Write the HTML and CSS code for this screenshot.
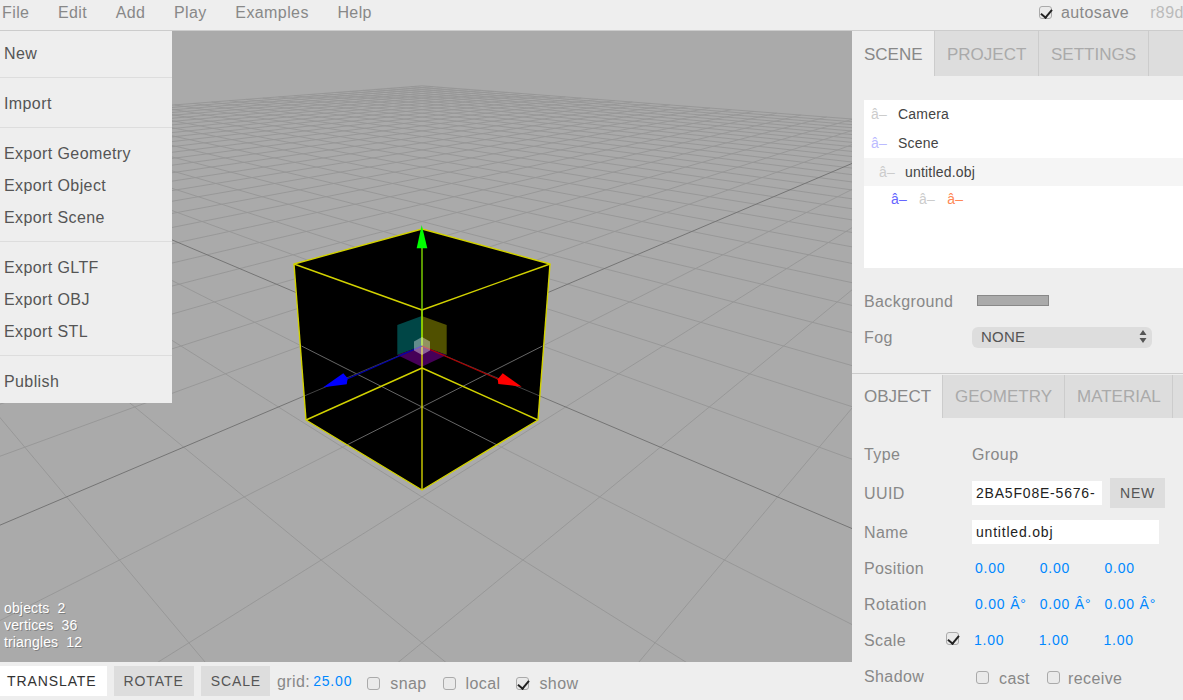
FILE: index.html
```html
<!DOCTYPE html>
<html lang="en">
<head>
<meta charset="utf-8">
<title>three.js editor</title>
<link rel="stylesheet" href="styles.css">
</head>
<body>
<div class="app">
  <header class="menubar">
    <span class="menu-title">File</span>
    <span class="menu-title">Edit</span>
    <span class="menu-title">Add</span>
    <span class="menu-title">Play</span>
    <span class="menu-title">Examples</span>
    <span class="menu-title">Help</span>
    <div class="menu-right">
      <input type="checkbox" class="check autosave-check" checked>
      <span class="autosave">autosave</span>
      <span class="version">r89dev</span>
    </div>
  </header>

  <nav class="file-menu">
    <div class="file-item">New</div>
    <div class="file-sep"></div>
    <div class="file-item">Import</div>
    <div class="file-sep"></div>
    <div class="file-item">Export Geometry</div>
    <div class="file-item">Export Object</div>
    <div class="file-item">Export Scene</div>
    <div class="file-sep"></div>
    <div class="file-item">Export GLTF</div>
    <div class="file-item">Export OBJ</div>
    <div class="file-item">Export STL</div>
    <div class="file-sep"></div>
    <div class="file-item">Publish</div>
  </nav>

  <div class="main">
    <div class="left">
      <div class="viewport">
        <svg class="scene" viewBox="0 31 852 631" preserveAspectRatio="none" xmlns="http://www.w3.org/2000/svg">
          <g id="grid" class="grid"></g>
          <polygon class="cube-body" points="294,264 422,229 550,264 538,420 422,490 306,420"/>
          <clipPath id="cube-clip"><polygon points="294,264 422,229 550,264 538,420 422,490 306,420"/></clipPath>
          <g class="cube-grid" clip-path="url(#cube-clip)">
            <line x1="542.5" y1="346" x2="342.5" y2="447.2"/>
            <line x1="301.5" y1="346" x2="501.5" y2="447.2"/>
            <line class="cube-grid-dark" x1="422" y1="346" x2="565.7" y2="407"/>
            <line class="cube-grid-dark" x1="422" y1="346" x2="278.3" y2="407"/>
          </g>
          <polygon class="gizmo-teal" points="397.3,325 421.7,316 421.7,346 397.3,355"/>
          <polygon class="gizmo-olive" points="421.7,316 446.7,325 446.7,355 421.7,346"/>
          <polygon class="gizmo-purple" points="397.3,355 421.7,346 446.7,355 421.7,366.7"/>
          <g class="cube-edges">
            <polygon points="294,264 422,229 550,264 422,310"/>
            <polygon points="306,420 422,368 538,420 422,490"/>
            <line x1="294" y1="264" x2="306" y2="420"/>
            <line x1="550" y1="264" x2="538" y2="420"/>
            <line x1="422" y1="310" x2="422" y2="490"/>
          </g>
          <line class="axis-green" x1="422" y1="248" x2="422" y2="346"/>
          <line class="axis-red" x1="422" y1="346" x2="500" y2="380"/>
          <line class="axis-blue" x1="422" y1="346" x2="345" y2="380"/>
          <polygon class="head-green" points="421.7,225 416.7,248.3 427.3,248.3"/>
          <polygon class="head-red" points="502.7,373.3 521.7,386.7 498.3,384 497.7,379.3"/>
          <polygon class="head-blue" points="343.3,373.3 323.3,387.3 346.7,384.3 347.7,378.3"/>
          <polygon class="gizmo-center" points="422,337 430,341.5 430,350.5 422,355 414,350.5 414,341.5"/>
        </svg>
        <div class="stats">
          <div>objects&nbsp;&nbsp;2</div>
          <div>vertices&nbsp;&nbsp;36</div>
          <div>triangles&nbsp;&nbsp;12</div>
        </div>
      </div>
      <div class="toolbar">
        <button class="tool tool-first tool-active">TRANSLATE</button>
        <button class="tool">ROTATE</button>
        <button class="tool tool-scale">SCALE</button>
        <span class="grid-label">grid:</span>
        <span class="num grid-value">25.00</span>
        <input type="checkbox" class="check tool-check">
        <span class="check-label">snap</span>
        <input type="checkbox" class="check tool-check">
        <span class="check-label">local</span>
        <input type="checkbox" class="check tool-check" checked>
        <span class="check-label">show</span>
      </div>
    </div>

    <aside class="sidebar">
      <section class="scene-panel">
        <div class="tabs">
          <div class="tab tab-active tab-scene">SCENE</div>
          <div class="tab tab-project">PROJECT</div>
          <div class="tab tab-settings">SETTINGS</div>
        </div>
        <div class="panel-body">
          <div class="outliner">
            <div class="tree-row"><span class="glyph glyph-grey">â–</span>Camera</div>
            <div class="tree-row"><span class="glyph glyph-lilac">â–</span>Scene</div>
            <div class="tree-row tree-selected tree-depth1"><span class="glyph glyph-pale">â–</span>untitled.obj</div>
            <div class="tree-row tree-depth2">
              <span class="glyph glyph-blue">â–</span>
              <span class="glyph glyph-grey">â–</span>
              <span class="glyph glyph-salmon">â–</span>
            </div>
          </div>
          <div class="row row-bg">
            <span class="label">Background</span>
            <span class="swatch"></span>
          </div>
          <div class="row">
            <span class="label">Fog</span>
            <div class="select">
              <span>NONE</span>
              <svg class="select-arrows" width="8" height="13" viewBox="0 0 8 13" xmlns="http://www.w3.org/2000/svg"><path d="M4 0 L7.5 5 H.5 Z M4 13 L7.5 8 H.5 Z"/></svg>
            </div>
          </div>
        </div>
      </section>

      <section class="object-panel">
        <div class="tabs tabs-object">
          <div class="tab tab-active tab-object">OBJECT</div>
          <div class="tab tab-geometry">GEOMETRY</div>
          <div class="tab tab-material">MATERIAL</div>
        </div>
        <div class="panel-body object-body">
          <div class="row row-type">
            <span class="label">Type</span>
            <span class="plain">Group</span>
          </div>
          <div class="row row-uuid">
            <span class="label">UUID</span>
            <div class="input input-uuid">2BA5F08E-5676-4</div>
            <button class="new-btn">NEW</button>
          </div>
          <div class="row">
            <span class="label">Name</span>
            <div class="input input-name">untitled.obj</div>
          </div>
          <div class="row">
            <span class="label">Position</span>
            <span class="num cell">0.00</span><span class="num cell">0.00</span><span class="num cell">0.00</span>
          </div>
          <div class="row">
            <span class="label">Rotation</span>
            <span class="num cell">0.00 Â°</span><span class="num cell">0.00 Â°</span><span class="num cell">0.00 Â°</span>
          </div>
          <div class="row">
            <span class="label label-scale">Scale</span>
            <input type="checkbox" class="check scale-check" checked>
            <span class="num cell cell-scale">1.00</span><span class="num cell cell-scale">1.00</span><span class="num cell cell-scale">1.00</span>
          </div>
          <div class="row">
            <span class="label">Shadow</span>
            <input type="checkbox" class="check shadow-check">
            <span class="check-label shadow-cast">cast</span>
            <input type="checkbox" class="check shadow-check2">
            <span class="check-label shadow-receive">receive</span>
          </div>
        </div>
      </section>
    </aside>
  </div>
</div>
<script src="grid.js"></script>
</body>
</html>
```

FILE: styles.css
```css
* { box-sizing: border-box; }

html, body {
  margin: 0;
  height: 100%;
  overflow: hidden;
}

body {
  font-family: "Liberation Sans", Arial, sans-serif;
  font-size: 16px;
  letter-spacing: .4px;
  color: #888;
  background: #eee;
}

.app {
  position: relative;
  display: flex;
  flex-direction: column;
  width: 1183px;
  height: 700px;
  overflow: hidden;
}

/* menubar */
.menubar {
  flex: none;
  display: flex;
  align-items: center;
  gap: 28.6px;
  height: 31px;
  padding: 0 0 5px 2px;
  background: #eee;
  border-bottom: 1px solid #ccc;
  white-space: nowrap;
}

.menu-right {
  flex: none;
  display: flex;
  align-items: center;
  width: 144px;
  margin-left: auto;
  overflow: hidden;
}

.autosave-check { margin-bottom: 3px; }
.autosave { margin-left: 9px; }
.version { margin-left: 21px; color: #bbb; }

/* checkbox */
.check {
  appearance: none;
  position: relative;
  flex: none;
  width: 13px;
  height: 13px;
  margin: 0;
  border: 1px solid #aaa;
  border-radius: 3px;
  background: #eaeaea;
}

.check:checked::after {
  content: "";
  position: absolute;
  left: 3px;
  top: 0;
  width: 5px;
  height: 9px;
  border-right: 2px solid #222;
  border-bottom: 2px solid #222;
  transform: rotate(40deg);
}

/* file menu overlay */
.file-menu {
  position: absolute;
  z-index: 5;
  left: 0;
  top: 31px;
  width: 172px;
  padding: 6px 0;
  background: #eee;
}

.file-item {
  height: 32px;
  padding-left: 4px;
  line-height: 34px;
  color: #555;
}

.file-sep {
  height: 1px;
  margin: 8px 0 9px;
  background: #ddd;
}

/* main layout */
.main {
  flex: 1;
  display: flex;
  min-height: 0;
}

.left {
  flex: none;
  display: flex;
  flex-direction: column;
  width: 852px;
}

.viewport {
  position: relative;
  flex: 1;
  min-height: 0;
  background: #aaa;
}

.scene {
  display: block;
  width: 100%;
  height: 100%;
}

.grid line { stroke: #979797; stroke-width: .95; }
.grid line.grid-center { stroke: #757575; stroke-width: 1; }

.cube-body { fill: #000; }
.cube-grid line { stroke: #666; stroke-width: 1; }
.cube-grid line.cube-grid-dark { stroke: #444; }

.gizmo-teal { fill: #004646; }
.gizmo-olive { fill: #505000; }
.gizmo-purple { fill: #460058; }
.gizmo-center { fill: #fff; fill-opacity: .38; }

.cube-edges polygon,
.cube-edges line {
  fill: none;
  stroke: #d2d200;
  stroke-width: 1.4;
  stroke-linejoin: round;
}

.axis-green { stroke: #80d800; stroke-width: 1.4; }
.axis-red { stroke: #b00000; stroke-width: 1.2; }
.axis-blue { stroke: #0000b0; stroke-width: 1.2; }
.head-green { fill: #0f0; }
.head-red { fill: #f00; }
.head-blue { fill: #00f; }

.stats {
  position: absolute;
  left: 4px;
  bottom: 11px;
  font-size: 14px;
  line-height: 17px;
  letter-spacing: .15px;
  color: #fff;
  text-shadow: 1px 1px 0 rgba(0, 0, 0, .25);
}

/* toolbar */
.toolbar {
  flex: none;
  display: flex;
  align-items: center;
  height: 38px;
  background: #eee;
  white-space: nowrap;
}

.tool {
  flex: none;
  height: 30px;
  margin-right: 7px;
  padding: 0 10px;
  border: 0;
  background: #ddd;
  color: #555;
  font: 14px "Liberation Sans", Arial, sans-serif;
  letter-spacing: .9px;
}

.tool-first { margin-left: -3px; }
.tool-active { background: #fff; color: #333; }
.tool-scale { padding: 0 9px 0 10px; }

.grid-label { margin-top: 1px; }

.num {
  font-size: 14px;
  letter-spacing: .8px;
  color: #08f;
}

.grid-value { margin-left: 3px; }

.tool-check { margin-left: 15px; margin-top: 4px; }
.tool-check ~ .tool-check { margin-left: 16px; }

.check-label { margin-left: 10px; margin-top: 5px; }

/* sidebar */
.sidebar {
  flex: none;
  width: 331px;
  overflow: hidden;
  background: #eee;
}

.tabs {
  display: flex;
  height: 45px;
  background: #ddd;
}

.tabs-object { height: 43px; }

.tab {
  flex: none;
  height: 100%;
  padding: 0 12px;
  border-right: 1px solid #ccc;
  font-size: 17px;
  letter-spacing: 0;
  line-height: 47px;
  color: #aaa;
}

.tabs-object .tab { line-height: 43px; }

.tab-active { background: #eee; color: #888; }
.tab-scene { width: 83px; }
.tab-project { width: 104px; }
.tab-settings { width: 110px; }
.tab-object { width: 91px; }
.tab-geometry { width: 122px; }
.tab-material { width: 108px; }

.panel-body { padding: 24px 0 24px 12px; }

.scene-panel { height: 342px; }

.object-panel {
  border-top: 1px solid #ccc;
  padding-top: 1px;
}

.object-body {
  display: flex;
  flex-direction: column;
  gap: 12px;
  padding-top: 23px;
}

.outliner {
  height: 168px;
  margin-bottom: 21px;
  background: #fff;
  font-size: 14px;
  letter-spacing: .2px;
  color: #444;
}

.tree-row {
  height: 29px;
  padding-left: 7px;
  line-height: 29px;
  white-space: nowrap;
}

.tree-selected { height: 28px; line-height: 28px; background: #f5f5f5; }
.tree-depth1 { padding-left: 15px; }
.tree-depth2 { padding-left: 27px; line-height: 26px; }

.glyph { display: inline-block; width: 27px; }
.tree-depth1 .glyph { width: 26px; }
.tree-depth2 .glyph { width: 24px; margin-right: 0; }
.glyph-grey { color: #ccc; }
.glyph-lilac { color: #bbf; }
.glyph-pale { color: #ccc; }
.glyph-blue { color: #66f; }
.glyph-salmon { color: #f85; }

.row {
  display: flex;
  align-items: center;
  height: 24px;
  white-space: nowrap;
}

.row-bg { margin-bottom: 12px; }
.row-type { height: 25px; }
.row-uuid { height: 30px; }

.label { flex: none; width: 108px; margin-top: 2px; }

.swatch {
  width: 72px;
  height: 11px;
  margin-left: 5px;
  margin-top: -1px;
  background: #aaa;
  border: 1px solid #888;
}

.select {
  display: flex;
  align-items: center;
  justify-content: space-between;
  width: 180px;
  height: 21px;
  padding: 0 5px 1px 9px;
  border-radius: 6px;
  background: #ddd;
  font-size: 15px;
  letter-spacing: .2px;
  color: #555;
}

.select-arrows { fill: #555; }

.plain { margin-top: 2px; color: #888; }

.input {
  height: 24px;
  padding-left: 4px;
  overflow: hidden;
  background: #fff;
  font-size: 14px;
  line-height: 24px;
  letter-spacing: .8px;
  color: #222;
}

.input-uuid { width: 130px; border-right: 7px solid #fff; }
.input-name { width: 187px; }

.new-btn {
  flex: none;
  width: 55px;
  height: 30px;
  margin-left: 8px;
  padding: 0;
  border: 0;
  background: #ddd;
  color: #555;
  font: 14px "Liberation Sans", Arial, sans-serif;
  letter-spacing: .8px;
}

.cell {
  flex: none;
  width: 64.7px;
  padding-left: 3px;
}

.label-scale { width: 82px; }
.scale-check { margin-right: 13px; margin-bottom: 4px; }
.cell-scale { padding-left: 2px; }

.shadow-check { margin-left: 4px; margin-top: 2px; }
.shadow-check2 { margin-left: 17px; margin-top: 2px; }
.shadow-receive { margin-left: 8px; }
```

FILE: grid.js
```js
// Perspective projection of the 25-unit floor grid of the 3D view.
(function () {
  var NS = "http://www.w3.org/2000/svg";
  var group = document.getElementById("grid");
  var F = 678, A = 0.4245, B = 0.9054, U = 0.1257, CX = 422, CY = 346;
  var N = 28, NEAR = 11.5;

  function project(x, z) {
    var along = (x + z) * Math.SQRT1_2 * U;
    var right = (x - z) * Math.SQRT1_2 * U;
    var depth = 1 - along * B;
    return [CX + F * right / depth, CY + F * A * along / depth];
  }

  function addLine(a, b, center) {
    var line = document.createElementNS(NS, "line");
    line.setAttribute("x1", a[0].toFixed(2));
    line.setAttribute("y1", a[1].toFixed(2));
    line.setAttribute("x2", b[0].toFixed(2));
    line.setAttribute("y2", b[1].toFixed(2));
    if (center) line.setAttribute("class", "grid-center");
    group.appendChild(line);
  }

  for (var i = -N; i <= N; i++) {
    var end = Math.min(N, NEAR - i);
    if (i === 0) continue;
    addLine(project(i, -N), project(i, end), false);
    addLine(project(-N, i), project(end, i), false);
  }
  addLine(project(0, -N), project(0, Math.min(N, NEAR)), true);
  addLine(project(-N, 0), project(Math.min(N, NEAR), 0), true);
})();
```
